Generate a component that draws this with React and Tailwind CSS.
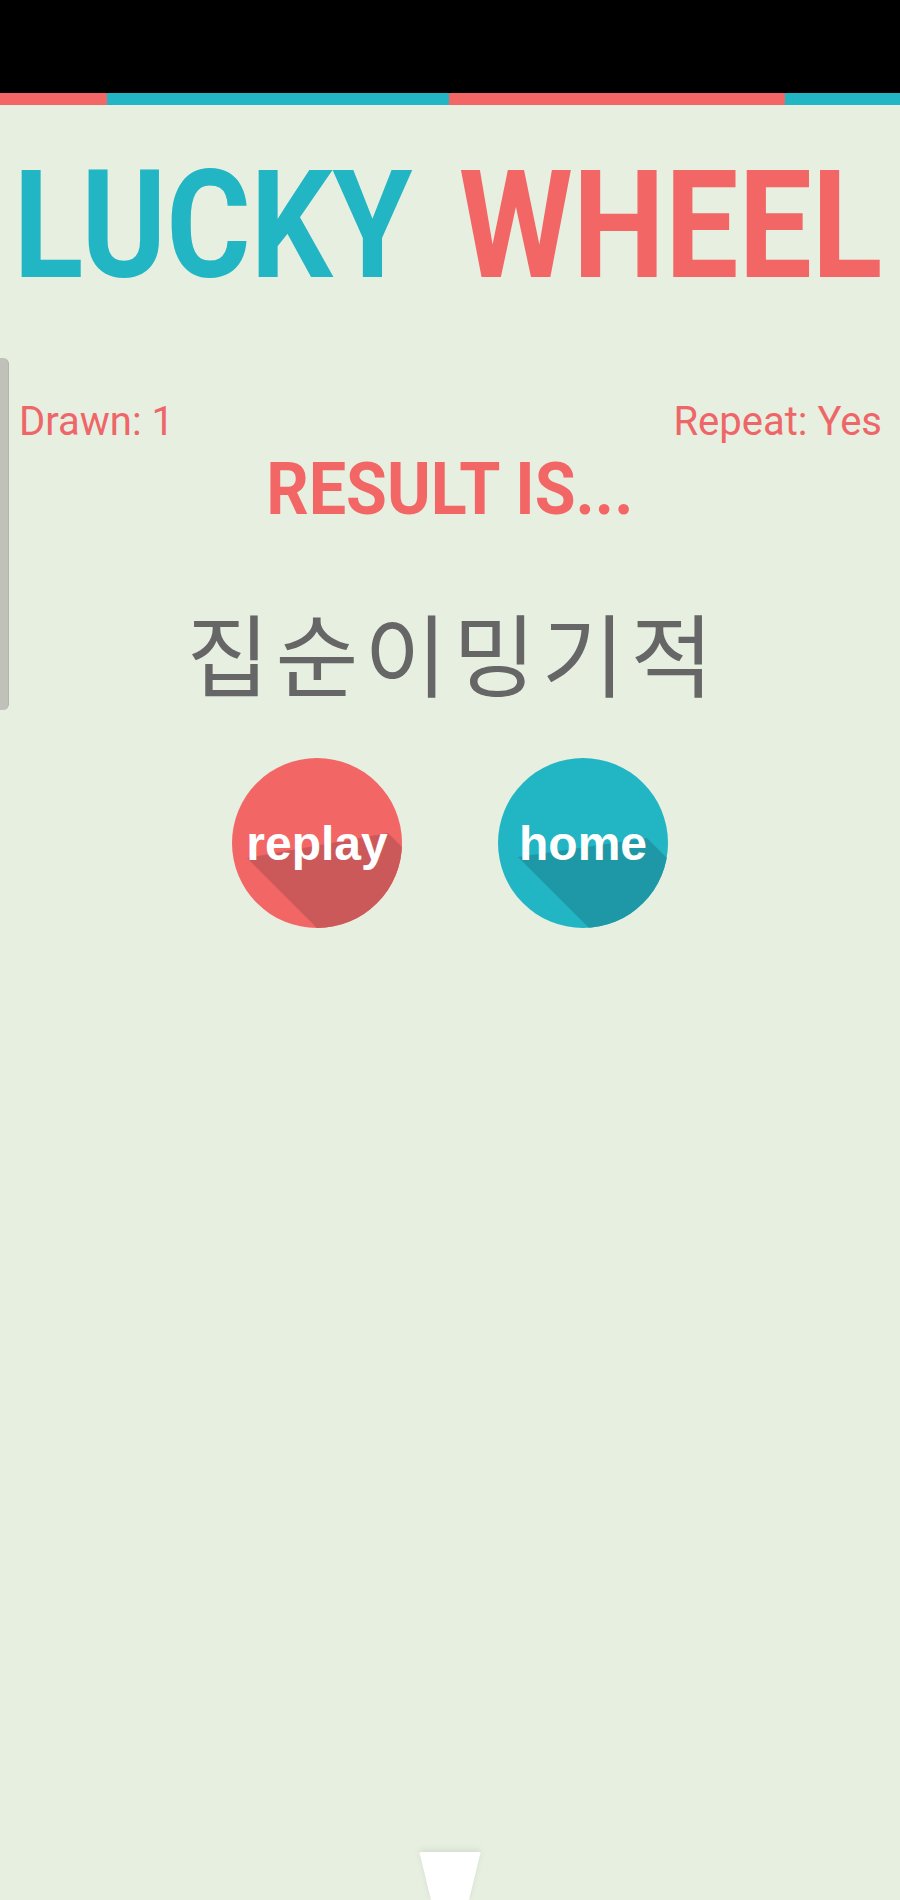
import React from "react";

function RoundButton({ label, bg, shade, poly }) {
  return (
    <div className={`relative w-[170px] h-[170px] rounded-full overflow-hidden ${bg}`}>
      <svg className="absolute inset-0" width="170" height="170" viewBox="0 0 170 170">
        <polygon points={poly} fill={shade} />
      </svg>
      <div className="absolute inset-0 flex items-center justify-center pt-[2px]">
        <span className="relative text-white font-bold text-[48px] leading-none font-['Liberation_Sans',Arial,sans-serif]">
          {label}
        </span>
      </div>
    </div>
  );
}

export default function App() {
  return (
    <div className="relative w-[900px] h-[1900px] overflow-hidden bg-[#e7efe1] flex flex-col">
      {/* status bar */}
      <div className="h-[93px] bg-black shrink-0" />
      {/* stripe */}
      <div className="h-[12px] flex shrink-0">
        <div className="w-[107px] bg-[#f26666]" />
        <div className="w-[342px] bg-[#22b5c4]" />
        <div className="w-[336px] bg-[#f26666]" />
        <div className="flex-1 bg-[#22b5c4]" />
      </div>

      {/* title */}
      <div className="mt-[46px] flex justify-start pl-[11px] gap-[47px] font-['Roboto',sans-serif] font-bold text-[150px] leading-none">
        <div className="w-[404px] flex justify-center">
          <span className="inline-block whitespace-nowrap scale-x-[0.86] text-[#22b5c4]">LUCKY</span>
        </div>
        <div className="w-[418px] flex justify-center">
          <span className="inline-block whitespace-nowrap scale-x-[0.87] text-[#f26666]">WHEEL</span>
        </div>
      </div>

      {/* info row */}
      <div className="mt-[101px] flex justify-between pl-[19px] pr-[18px] font-['Roboto',sans-serif] text-[40px] leading-none text-[#ee6668]">
        <span>Drawn: 1</span>
        <span>Repeat: Yes</span>
      </div>

      {/* result label */}
      <div className="mt-[11px] flex justify-center font-['Roboto',sans-serif] font-bold text-[73px] leading-none text-[#f26666]">
        <div className="w-[364px] flex justify-center">
          <span className="inline-block whitespace-nowrap scale-x-[0.91]">RESULT IS...</span>
        </div>
      </div>

      {/* result value */}
      <div className="mt-[80px] flex justify-center pl-[6px] tracking-[6px] font-['Noto_Sans_CJK_KR',sans-serif] text-[90px] leading-none text-[#666666]">
        집순이밍기적
      </div>

      {/* buttons */}
      <div className="mt-[62px] flex justify-center gap-[96px]">
        <RoundButton
          label="replay"
          bg="bg-[#f26666]"
          shade="#cc5959"
          poly="15,100 215,300 356,275 156,75"
        />
        <RoundButton
          label="home"
          bg="bg-[#22b5c4]"
          shade="#1e98a6"
          poly="20,99 220,299 349,280 149,80"
        />
      </div>

      {/* wheel pointer */}
      <div className="mt-auto flex justify-center h-[48px]">
        <svg width="84" height="48" viewBox="0 0 84 48" className="overflow-visible">
          <defs>
            <filter id="ps" x="-50%" y="-50%" width="200%" height="200%">
              <feGaussianBlur stdDeviation="3" />
            </filter>
          </defs>
          <path d="M12 2 Q10 0 13 0 L71 0 Q74 0 72 2 L61 48 L23 48 Z" fill="#c9d3c2" opacity="0.7" filter="url(#ps)" transform="translate(0,-2)" />
          <path d="M12 3 Q10 0 14 0 L70 0 Q74 0 72 3 L61 48 L23 48 Z" fill="#ffffff" />
        </svg>
      </div>

      {/* edge handle */}
      <div className="absolute left-0 top-[358px] w-[9px] h-[352px] bg-[#c0c1b9] rounded-r-[6px] border-r border-[#b3b4ad]" />
    </div>
  );
}
